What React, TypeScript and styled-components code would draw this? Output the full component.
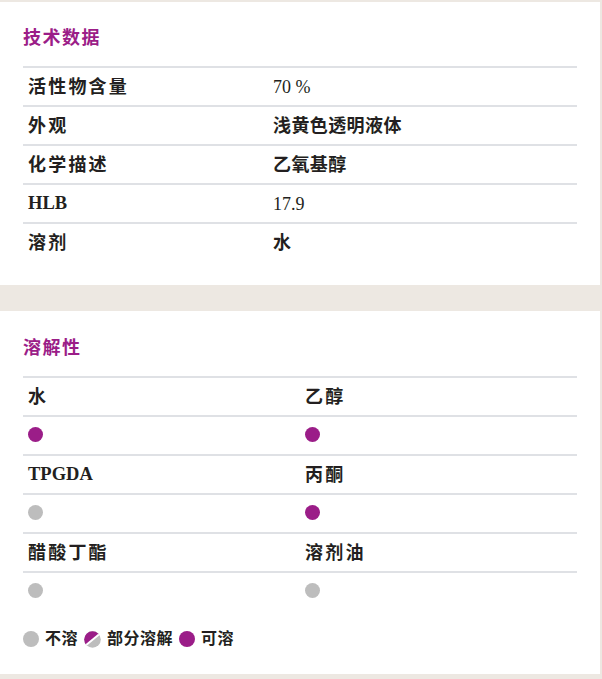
import styled, { createGlobalStyle } from 'styled-components'

const PURPLE = '#9b1d88'
const GREY = '#bdbdbd'

type Level = 'none' | 'full'

const techRows: { label: string; value: string; plain?: boolean }[] = [
  { label: '活性物含量', value: '70 %', plain: true },
  { label: '外观', value: '浅黄色透明液体' },
  { label: '化学描述', value: '乙氧基醇' },
  { label: 'HLB', value: '17.9', plain: true },
  { label: '溶剂', value: '水' },
]

const solvents: { name: string; level: Level }[][] = [
  [{ name: '水', level: 'full' }, { name: '乙醇', level: 'full' }],
  [{ name: 'TPGDA', level: 'none' }, { name: '丙酮', level: 'full' }],
  [{ name: '醋酸丁酯', level: 'none' }, { name: '溶剂油', level: 'none' }],
]

const isLatin = (s: string) => /^[A-Za-z0-9 .%]+$/.test(s)

const GlobalStyle = createGlobalStyle`
  body {
    margin: 0;
    background: #ede8e2;
    font-family: "Liberation Serif", "Noto Sans CJK SC", serif;
    color: #231f20;
  }
`

const App = () => {
  return (
    <>
      <GlobalStyle />
      <StyledPage>
        <StyledCard $top={25} $bottom={24}>
          <StyledTitle>技术数据</StyledTitle>
          <StyledTechTable>
            {techRows.map(row => (
              <StyledTechRow key={row.label}>
                <StyledLabel $latin={isLatin(row.label)}>{row.label}</StyledLabel>
                <StyledValue $plain={row.plain}>{row.value}</StyledValue>
              </StyledTechRow>
            ))}
          </StyledTechTable>
        </StyledCard>
        <StyledCard $top={26} $bottom={25}>
          <StyledTitle>溶解性</StyledTitle>
          <StyledSolGrid>
            {solvents.map((pair, i) => (
              <StyledSolGroup key={i}>
                {pair.map(s => (
                  <StyledSolCell key={s.name}>
                    <StyledLabel $latin={isLatin(s.name)}>{s.name}</StyledLabel>
                  </StyledSolCell>
                ))}
                {pair.map(s => (
                  <StyledSolCell key={s.name + '-dot'} $dot>
                    <Dot $level={s.level} />
                  </StyledSolCell>
                ))}
              </StyledSolGroup>
            ))}
          </StyledSolGrid>
          <StyledLegend>
            <Dot $level="none" $size={16} />
            <span>不溶</span>
            <PartialIcon />
            <span>部分溶解</span>
            <Dot $level="full" $size={16} />
            <span>可溶</span>
          </StyledLegend>
        </StyledCard>
      </StyledPage>
    </>
  )
}

const PartialIcon = () => (
  <svg width="17" height="17" viewBox="0 0 17 17">
    <defs>
      <clipPath id="partial-clip">
        <circle cx="8.5" cy="8.5" r="8.3" />
      </clipPath>
    </defs>
    <g clipPath="url(#partial-clip)">
      <rect x="0" y="0" width="17" height="17" fill={GREY} />
      <polygon points="0,0 17,0 17,2 0,15" fill={PURPLE} />
      <line x1="-1" y1="16.5" x2="18" y2="1" stroke="#fff" strokeWidth="2" />
    </g>
  </svg>
)

const StyledPage = styled.div`
  padding: 2px 2px 4px 0;
  display: flex;
  flex-direction: column;
  gap: 26px;
`

const StyledCard = styled.section<{ $top: number; $bottom: number }>`
  background: #fff;
  padding: ${p => p.$top}px 23px ${p => p.$bottom}px;
`

const StyledTitle = styled.h2`
  margin: 0 0 17px;
  font-size: 18px;
  line-height: 22px;
  font-weight: 700;
  letter-spacing: 1.5px;
  color: ${PURPLE};
`

const StyledTechTable = styled.div`
  display: flex;
  flex-direction: column;
`

const StyledTechRow = styled.div`
  display: grid;
  grid-template-columns: 245px 1fr;
  border-top: 2px solid #dfe1e5;
  height: 37px;
  align-items: center;
  padding: 0 5px;
`

const StyledLabel = styled.span<{ $latin?: boolean }>`
  display: block;
  font-size: ${p => (p.$latin ? '18.5px' : '18px')};
  line-height: 1;
  font-weight: 700;
  letter-spacing: ${p => (p.$latin ? '0' : '2.2px')};
`

const StyledValue = styled.span<{ $plain?: boolean }>`
  display: block;
  font-size: 18px;
  line-height: 1;
  font-weight: ${p => (p.$plain ? 400 : 700)};
  letter-spacing: ${p => (p.$plain ? '0' : '0.4px')};
`

const StyledSolGrid = styled.div`
  display: flex;
  flex-direction: column;
`

const StyledSolGroup = styled.div`
  display: grid;
  grid-template-columns: 1fr 1fr;
`

const StyledSolCell = styled.div<{ $dot?: boolean }>`
  box-sizing: border-box;
  border-top: 2px solid #dfe1e5;
  height: 39px;
  display: flex;
  align-items: center;
  padding: 0 5px ${p => (p.$dot ? '3px' : '0')};
`

const Dot = styled.span<{ $level: Level; $size?: number }>`
  display: inline-block;
  flex-shrink: 0;
  width: ${p => p.$size ?? 15}px;
  height: ${p => p.$size ?? 15}px;
  border-radius: 50%;
  background: ${p => (p.$level === 'full' ? PURPLE : GREY)};
`

const StyledLegend = styled.div`
  margin-top: 19px;
  display: flex;
  align-items: center;
  gap: 6px;
  height: 20px;
  font-size: 16px;
  line-height: 1;
  font-weight: 700;
  letter-spacing: 0.5px;
`

export default App
